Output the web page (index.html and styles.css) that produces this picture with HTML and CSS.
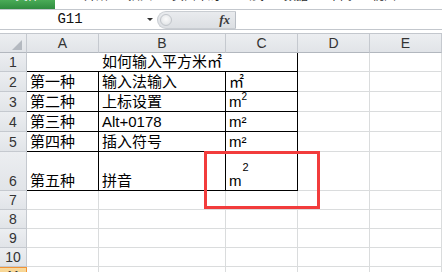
FILE: index.html
```html
<!DOCTYPE html>
<html>
<head>
<meta charset="utf-8">
<link rel="stylesheet" href="styles.css">
</head>
<body>
<div class="app">
  <div class="ribbon">
    <div class="tab file"><span>文件</span></div>
    <div class="tab"><span>开始</span></div>
    <div class="tab"><span>插入</span></div>
    <div class="tab"><span>页面布局</span></div>
    <div class="tab"><span>公式</span></div>
    <div class="tab"><span>数据</span></div>
    <div class="tab"><span>审阅</span></div>
    <div class="tab"><span>视图</span></div>
  </div>
  <div class="fbar">
    <div class="namebox">G11</div>
    <div class="nbarrow"><span class="caret"></span></div>
    <div class="fxpanel"><span class="grip"></span><span class="fx">fx</span></div>
    <div class="finput"></div>
  </div>
  <div class="sep"></div>
  <div class="sheet">
    <div class="hd corner"><span class="tri"></span></div>
    <div class="hd ch">A</div>
    <div class="hd ch">B</div>
    <div class="hd ch">C</div>
    <div class="hd ch">D</div>
    <div class="hd ch">E</div>

    <div class="hd rh">1</div>
    <div class="c bk title">如何输入平方米㎡</div>
    <div class="c"></div>
    <div class="c"></div>

    <div class="hd rh">2</div>
    <div class="c bk">第一种</div>
    <div class="c bk">输入法输入</div>
    <div class="c bk">㎡</div>
    <div class="c"></div>
    <div class="c"></div>

    <div class="hd rh">3</div>
    <div class="c bk">第二种</div>
    <div class="c bk">上标设置</div>
    <div class="c bk"><span>m<span class="sup">2</span></span></div>
    <div class="c"></div>
    <div class="c"></div>

    <div class="hd rh">4</div>
    <div class="c bk">第三种</div>
    <div class="c bk">Alt+0178</div>
    <div class="c bk">m²</div>
    <div class="c"></div>
    <div class="c"></div>

    <div class="hd rh">5</div>
    <div class="c bk">第四种</div>
    <div class="c bk">插入符号</div>
    <div class="c bk">m²</div>
    <div class="c"></div>
    <div class="c"></div>

    <div class="hd rh">6</div>
    <div class="c bk">第五种</div>
    <div class="c bk">拼音</div>
    <div class="c bk"><span>m<span class="sup6">2</span></span></div>
    <div class="c"></div>
    <div class="c"></div>

    <div class="hd rh">7</div>
    <div class="c"></div><div class="c"></div><div class="c"></div><div class="c"></div><div class="c"></div>
    <div class="hd rh">8</div>
    <div class="c"></div><div class="c"></div><div class="c"></div><div class="c"></div><div class="c"></div>
    <div class="hd rh">9</div>
    <div class="c"></div><div class="c"></div><div class="c"></div><div class="c"></div><div class="c"></div>
    <div class="hd rh">10</div>
    <div class="c"></div><div class="c"></div><div class="c"></div><div class="c"></div><div class="c"></div>
    <div class="hd rh sel">11</div>
    <div class="c"></div><div class="c"></div><div class="c"></div><div class="c"></div><div class="c"></div>

    <div class="redbox"></div>
  </div>
</div>
</body>
</html>
```

FILE: styles.css
```css
* { box-sizing: border-box; }
html, body {
  margin: 0;
  padding: 0;
  background: #fff;
  overflow: hidden;
}
.app {
  width: 442px;
  height: 272px;
  overflow: hidden;
  font-family: "Liberation Sans", "Noto Sans CJK SC", sans-serif;
}

/* ribbon remnants */
.ribbon {
  height: 10px;
  display: flex;
  gap: 20px;
  overflow: hidden;
  border-bottom: 1px solid #c3c7cd;
  background: #fff;
}
.tab {
  height: 9px;
  overflow: hidden;
  font: 12px/12px "Noto Sans CJK SC", sans-serif;
  color: #2b2b2b;
}
.tab span { display: block; margin-top: -11px; }
.tab.file {
  width: 55px;
  margin-right: 9px;
  text-align: center;
  color: #fff;
  background: linear-gradient(#4aab57, #2f8c3f);
}

/* formula bar */
.fbar {
  height: 20px;
  display: flex;
  border-bottom: 1px solid #c3c7cd;
  background: #fff;
}
.namebox {
  width: 140px;
  font: 14px/19px "Liberation Mono", monospace;
  text-align: center;
  color: #111;
}
.nbarrow {
  width: 17px;
  display: flex;
  align-items: center;
  padding-left: 7px;
}
.caret {
  width: 0;
  height: 0;
  border-left: 3px solid transparent;
  border-right: 3px solid transparent;
  border-top: 3px solid #333;
}
.fxpanel {
  width: 79px;
  margin: 1px 0 0;
  height: 18px;
  background: linear-gradient(#e9ebee, #dcdfe3);
  border-radius: 9px 0 0 9px;
  border: 1px solid #c9cdd2;
  border-right: 1px solid #b9bec5;
  display: flex;
  align-items: center;
  justify-content: space-between;
  padding: 0 5px 0 2px;
}
.grip {
  width: 12px;
  height: 12px;
  border-radius: 50%;
  background: radial-gradient(circle at 50% 40%, #fbfbfb 0%, #e8eaec 60%, #cfd3d7 100%);
  border: 1px solid #c2c6cb;
}
.fx {
  font: italic bold 13px/16px "Liberation Serif", serif;
  color: #3a3a3a;
}
.finput { flex: 1; background: #fff; }

.sep {
  height: 4px;
  border-bottom: 1px solid #c3c7cd;
}

/* sheet grid */
.sheet {
  position: relative;
  display: grid;
  grid-template-columns: 27px 72px 127px 72px 72px 72px;
  grid-template-rows: 19px 19px 20px 20px 20px 20px 39px 19px 19px 19px 19px 19px;
}
.hd {
  background: linear-gradient(#eceef1, #e1e4e8);
  border-right: 1px solid #c5c9cf;
  border-bottom: 1px solid #c5c9cf;
  color: #333;
  font: 14px/16px "Liberation Sans", sans-serif;
  display: flex;
  justify-content: center;
}
.ch { align-items: center; border-bottom-color: #b2b7be; }
.corner {
  align-items: flex-end;
  justify-content: flex-end;
  padding: 0 4px 2px 0;
  border-bottom-color: #b2b7be;
}
.tri {
  width: 0;
  height: 0;
  border-left: 10px solid transparent;
  border-bottom: 10px solid #b4b9c0;
}
.rh { align-items: flex-end; padding-bottom: 1px; }
.rh.sel {
  background: linear-gradient(#f9dca4, #f2c462);
  box-shadow: inset 0 1px 0 #f29436;
  border-right-color: #f29436;
}
.c {
  border-right: 1px solid #dadcdd;
  border-bottom: 1px solid #dadcdd;
  display: flex;
  align-items: flex-end;
  padding: 0 3px;
  font: 15px/18px "Liberation Sans", "Noto Sans CJK SC", sans-serif;
  color: #000;
  white-space: nowrap;
}
.c.bk {
  border-right-color: #000;
  border-bottom-color: #000;
}
.title {
  grid-column: span 3;
  justify-content: center;
}
.sup {
  font-size: 10px;
  vertical-align: 7px;
  line-height: 10px;
}
.sup6 {
  font-size: 11px;
  vertical-align: 15px;
  line-height: 11px;
  margin-left: 1px;
}
.redbox {
  position: absolute;
  left: 204px;
  top: 117px;
  width: 116px;
  height: 58px;
  border: 3px solid #f23c3c;
  pointer-events: none;
}
```
